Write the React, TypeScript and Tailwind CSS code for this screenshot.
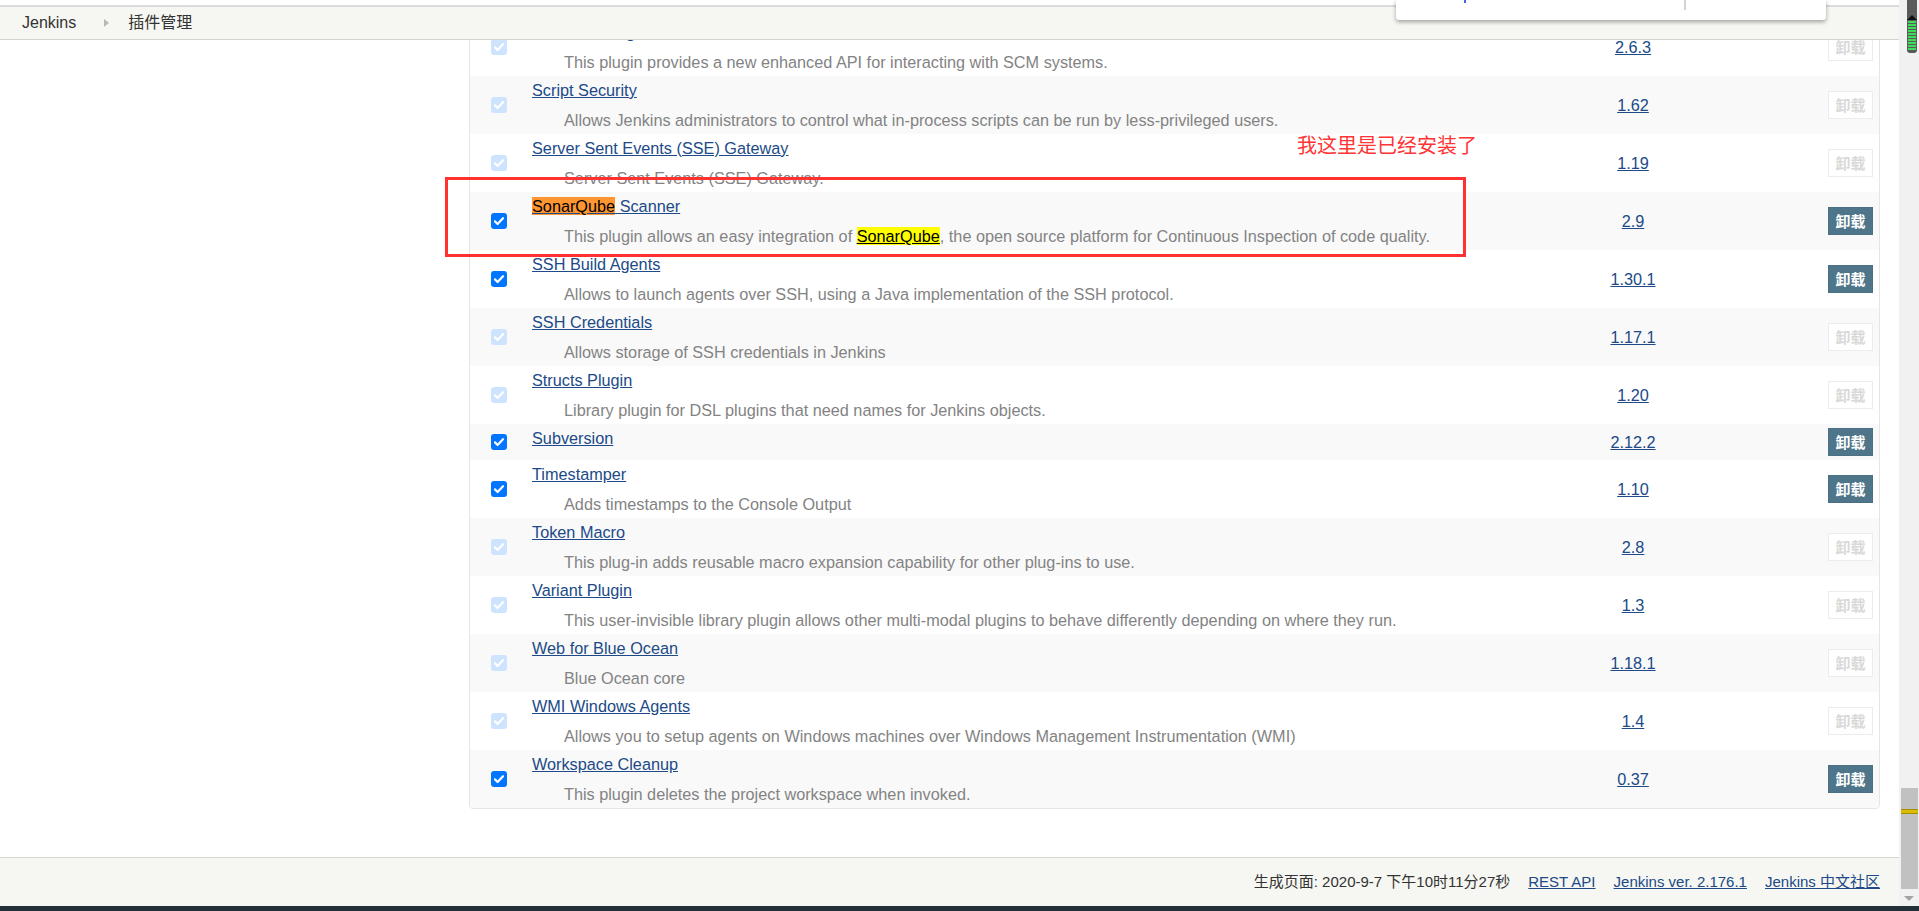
import { clsx } from "clsx";

type Plugin = {
  name: string;
  desc?: string;
  version: string;
  enabled: boolean;
};

const plugins: Plugin[] = [
  {
    name: "SCM API Plugin",
    desc: "This plugin provides a new enhanced API for interacting with SCM systems.",
    version: "2.6.3",
    enabled: false,
  },
  {
    name: "Script Security",
    desc: "Allows Jenkins administrators to control what in-process scripts can be run by less-privileged users.",
    version: "1.62",
    enabled: false,
  },
  {
    name: "Server Sent Events (SSE) Gateway",
    desc: "Server Sent Events (SSE) Gateway.",
    version: "1.19",
    enabled: false,
  },
  { name: "SonarQube Scanner", version: "2.9", enabled: true },
  {
    name: "SSH Build Agents",
    desc: "Allows to launch agents over SSH, using a Java implementation of the SSH protocol.",
    version: "1.30.1",
    enabled: true,
  },
  {
    name: "SSH Credentials",
    desc: "Allows storage of SSH credentials in Jenkins",
    version: "1.17.1",
    enabled: false,
  },
  {
    name: "Structs Plugin",
    desc: "Library plugin for DSL plugins that need names for Jenkins objects.",
    version: "1.20",
    enabled: false,
  },
  { name: "Subversion", version: "2.12.2", enabled: true },
  {
    name: "Timestamper",
    desc: "Adds timestamps to the Console Output",
    version: "1.10",
    enabled: true,
  },
  {
    name: "Token Macro",
    desc: "This plug-in adds reusable macro expansion capability for other plug-ins to use.",
    version: "2.8",
    enabled: false,
  },
  {
    name: "Variant Plugin",
    desc: "This user-invisible library plugin allows other multi-modal plugins to behave differently depending on where they run.",
    version: "1.3",
    enabled: false,
  },
  {
    name: "Web for Blue Ocean",
    desc: "Blue Ocean core",
    version: "1.18.1",
    enabled: false,
  },
  {
    name: "WMI Windows Agents",
    desc: "Allows you to setup agents on Windows machines over Windows Management Instrumentation (WMI)",
    version: "1.4",
    enabled: false,
  },
  {
    name: "Workspace Cleanup",
    desc: "This plugin deletes the project workspace when invoked.",
    version: "0.37",
    enabled: true,
  },
];

function Check({ enabled }: { enabled: boolean }) {
  return (
    <span
      className={clsx(
        "flex h-4 w-4 items-center justify-center rounded-[3px]",
        enabled ? "bg-[#0075ff]" : "bg-[#cde3fe]"
      )}
    >
      <svg viewBox="0 0 16 16" className="h-4 w-4">
        <path
          d="M4 8.4l2.6 2.6L12 5.2"
          fill="none"
          stroke="white"
          strokeWidth="2.2"
          strokeLinecap="round"
          strokeLinejoin="round"
        />
      </svg>
    </span>
  );
}

// 插件名 + 描述；SonarQube 这一行带浏览器查找高亮
function PluginInfo({ plugin }: { plugin: Plugin }) {
  const sonar = plugin.name === "SonarQube Scanner";
  return (
    <div className={clsx("flex-1 pt-[4px]", plugin.desc || sonar ? "pb-[4px]" : "pb-[12px]")}>
      <a className="block h-[20px] leading-[20px] text-[#204a87] underline">
        {sonar ? (
          <>
            <span className="bg-[#ff9632] text-black">SonarQube</span> Scanner
          </>
        ) : (
          plugin.name
        )}
      </a>
      {sonar ? (
        <div className="mt-[10px] pl-[32px] leading-[20px] text-[#838383]">
          This plugin allows an easy integration of{" "}
          <a className="bg-[#ffff00] text-black underline">SonarQube</a>, the open source platform
          for Continuous Inspection of code quality.
        </div>
      ) : plugin.desc ? (
        <div className="mt-[10px] pl-[32px] leading-[20px] text-[#838383]">{plugin.desc}</div>
      ) : null}
    </div>
  );
}

function PluginRow({ plugin, index }: { plugin: Plugin; index: number }) {
  return (
    <div className={clsx("flex items-center", index % 2 ? "bg-[#f9f9f9]" : "bg-white")}>
      <div className="flex w-[62px] pl-[21px]">
        <Check enabled={plugin.enabled} />
      </div>
      <PluginInfo plugin={plugin} />
      <div className="w-[372px] text-center">
        <a className="text-[#204a87] underline">{plugin.version}</a>
      </div>
      <div className="flex w-[60px] justify-end pr-[6px]">
        <button
          type="button"
          className={clsx(
            "h-[28px] w-[45px] border text-[15px] leading-none font-bold",
            plugin.enabled
              ? "border-[#4a7086] bg-[#4e7589] text-white"
              : "border-[#ececec] bg-white text-[#d9d9d9]"
          )}
        >
          卸载
        </button>
      </div>
    </div>
  );
}

function Scrollbar() {
  return (
    <div className="relative h-full w-[20px] bg-[#f1f1f1]">
      {/* 顶部的标记条 */}
      <div className="absolute top-0 left-[8px] flex h-[53px] w-[10px] flex-col items-center rounded-b-[3px] bg-[#5a5a5a] pt-[15px]">
        <span className="h-0 w-0 border-x-[5px] border-b-[5px] border-x-transparent border-b-[#111]" />
        <div className="mt-[1px] flex flex-col gap-[1px]">
          {Array.from({ length: 10 }).map((_, i) => (
            <span key={i} className="block h-[2px] w-[8px] bg-[#3fdc5c]" />
          ))}
        </div>
      </div>
      <div className="absolute top-[788px] left-[2px] h-[101px] w-[17px] bg-[#c1c1c1]">
        <div className="mt-[21px] h-[5px] border-y border-[#a58f00] bg-[#d8bd00]" />
      </div>
      <span className="absolute top-[896px] left-[5px] h-0 w-0 border-x-[5px] border-t-[5px] border-x-transparent border-t-[#a3a3a3]" />
    </div>
  );
}

export default function App() {
  return (
    <div className="flex h-[911px] w-[1919px] flex-col overflow-hidden bg-white font-['Liberation_Sans','Noto_Sans_CJK_SC',sans-serif] text-[16px] text-[#333]">
      <div className="flex h-[906px]">
        <div className="relative flex w-[1899px] flex-col">
          <main className="flex-1 pt-[17px] text-[16.25px]">
            <div className="ml-[469px] w-[1411px] overflow-hidden rounded-b-[4px] border border-[#e5e5e5]">
              {plugins.map((p, i) => (
                <PluginRow key={p.name} plugin={p} index={i} />
              ))}
            </div>
          </main>

          <footer className="flex h-[49px] items-center justify-end gap-[18px] border-t border-[#d4d6d0] bg-[#f6f7f2] pr-[19px] text-[15px]">
            <span>生成页面: 2020-9-7 下午10时11分27秒</span>
            <a className="text-[#204a87] underline">REST API</a>
            <a className="text-[#204a87] underline">Jenkins ver. 2.176.1</a>
            <a className="text-[#204a87] underline">Jenkins 中文社区</a>
          </footer>

          {/* 固定的面包屑栏 */}
          <div className="absolute top-0 left-0 w-full">
            <div className="h-[5px] bg-white" />
            <div className="h-[2px] bg-[#dadada]" />
            <div className="flex h-[33px] items-center border-b border-[#d2d4ce] bg-[#f6f7f2] pl-[22px]">
              <span>Jenkins</span>
              <span className="ml-[28px] h-0 w-0 border-y-[4px] border-l-[5px] border-y-transparent border-l-[#b8b8b8]" />
              <span className="ml-[19px]">插件管理</span>
            </div>
          </div>

          {/* 浏览器查找框的下沿 */}
          <div className="absolute top-0 left-[1396px] h-[20px] w-[430px] rounded-b-[3px] bg-white shadow-[0_2px_4px_rgba(0,0,0,0.35)]">
            <span className="absolute top-0 left-[68px] h-[3px] w-[2px] bg-[#3a6fd8]" />
            <span className="absolute top-0 left-[288px] h-[10px] w-[2px] bg-[#d4d4d4]" />
          </div>

          {/* 截图里的红色标注 */}
          <div className="absolute top-[136px] left-[1297px] text-[20px] leading-[20px] text-[#ff3434]">
            我这里是已经安装了
          </div>
          <div className="absolute top-[177px] left-[445px] h-[80px] w-[1021px] border-[3px] border-[#ff3131]" />
        </div>
        <Scrollbar />
      </div>
      <div className="h-[5px] bg-[#223038]" />
    </div>
  );
}
